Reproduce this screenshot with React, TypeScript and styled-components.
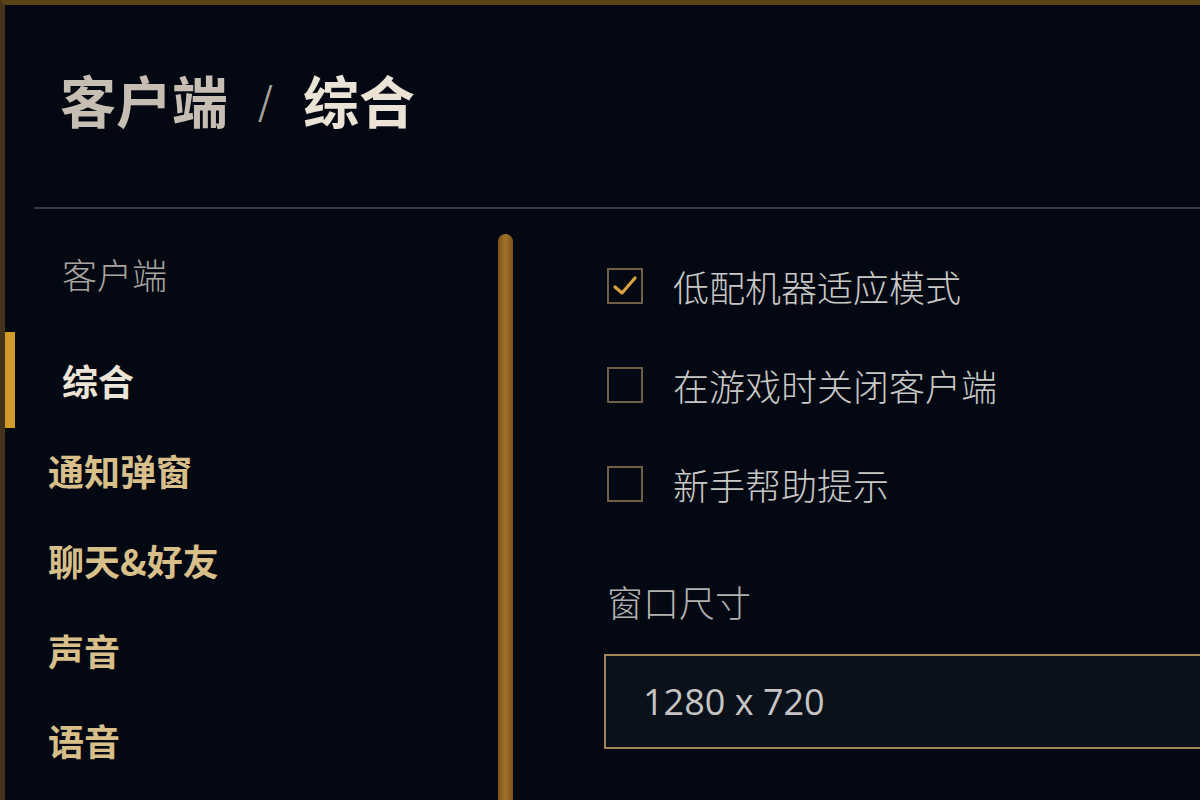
import styled, { createGlobalStyle } from 'styled-components'

const GlobalStyle = createGlobalStyle`
  html, body {
    margin: 0;
    padding: 0;
    background: #030812;
    overflow: hidden;
  }
  * { box-sizing: border-box; }
`

const FONT = `"Noto Sans CJK SC", "Noto Sans", sans-serif`

const Frame = styled.div`
  width: 1200px;
  height: 800px;
  background: #030812;
  border-top: 5px solid #5a4217;
  border-left: 5px solid #45321a;
  font-family: ${FONT};
  display: flex;
  flex-direction: column;
  overflow: hidden;
`

const Header = styled.header`
  height: 202px;
  padding: 49px 0 0 55px;
  display: flex;
  align-items: flex-start;
  gap: 30px;
  font-size: 56px;
  font-weight: 700;
  line-height: 90px;
`

const Crumb = styled.span<{ $current?: boolean }>`
  color: ${p => (p.$current ? '#ebe3d6' : '#c6beb2')};
`

const Slash = styled.span`
  color: #a8a39a;
  font-weight: 400;
  font-size: 38px;
`

const Divider = styled.hr`
  margin: 0 0 0 29px;
  border: none;
  height: 2px;
  background: #363b48;
`

const Body = styled.div`
  flex: 1;
  display: grid;
  grid-template-columns: 493px 16px 1fr;
  min-height: 0;
`

const Sidebar = styled.nav`
  display: flex;
  flex-direction: column;
  padding-top: 40px;
`

const GroupLabel = styled.div`
  padding-left: 57px;
  height: 50px;
  font-size: 35px;
  line-height: 50px;
  color: #a9a6a1;
  font-weight: 300;
  margin-bottom: 33px;
`

const NavItem = styled.div<{ $active?: boolean }>`
  position: relative;
  height: 96px;
  display: flex;
  align-items: center;
  padding-left: ${p => (p.$active ? '57px' : '43px')};
  font-size: 36px;
  font-weight: 700;
  color: ${p => (p.$active ? '#ece4d6' : '#d8bf8a')};
  margin-top: ${p => (p.$active ? '0' : '-6px')};

  &::before {
    content: '';
    display: ${p => (p.$active ? 'block' : 'none')};
    position: absolute;
    left: 0;
    top: 0;
    bottom: 0;
    width: 10px;
    background: #d39b2c;
  }
`

const ScrollTrack = styled.div`
  padding-top: 25px;
`

const ScrollThumb = styled.div`
  width: 15px;
  height: 100%;
  border-radius: 8px 8px 0 0;
  background: linear-gradient(90deg, #7d5318, #a1712a 50%, #7d5318);
`

const Content = styled.section`
  padding: 52px 0 0 93px;
  display: flex;
  flex-direction: column;
`

const CheckRow = styled.label`
  display: flex;
  align-items: center;
  gap: 30px;
  height: 50px;
  margin-bottom: 49px;
  font-size: 36px;
  color: #c9c8c6;
  font-weight: 300;
`

const Box = styled.span`
  width: 36px;
  height: 36px;
  border: 2px solid #6f5f47;
  display: flex;
  align-items: center;
  justify-content: center;
  flex-shrink: 0;
`

const FieldLabel = styled.div`
  margin-top: 18px;
  font-size: 36px;
  font-weight: 300;
  color: #b3b2b0;
  line-height: 50px;
`

const SelectBox = styled.div`
  margin: 28px -10px 0 -3px;
  height: 95px;
  border: 2px solid #a3855a;
  background: #0b111b;
  display: flex;
  align-items: center;
  padding-left: 37px;
  font-family: "Open Sans", "Noto Sans", sans-serif;
  font-size: 36px;
  color: #c6c5c3;
`

function CheckBox({ checked }: { checked?: boolean }) {
  return (
    <Box>
      {checked && (
        <svg width="26" height="22" viewBox="0 0 26 22">
          <path d="M3 12 L10 18 L23 3" fill="none" stroke="#d9a23f" strokeWidth="3.2" strokeLinecap="round" strokeLinejoin="round" />
        </svg>
      )}
    </Box>
  )
}

const options = [
  { label: '低配机器适应模式', checked: true },
  { label: '在游戏时关闭客户端', checked: false },
  { label: '新手帮助提示', checked: false },
]

const navItems = ['通知弹窗', '聊天&好友', '声音', '语音']

export default function App() {
  return (
    <>
      <GlobalStyle />
      <Frame>
        <Header>
          <Crumb>客户端</Crumb>
          <Slash>/</Slash>
          <Crumb $current>综合</Crumb>
        </Header>
        <Divider />
        <Body>
          <Sidebar>
            <GroupLabel>客户端</GroupLabel>
            <NavItem $active>综合</NavItem>
            {navItems.map(item => (
              <NavItem key={item}>{item}</NavItem>
            ))}
          </Sidebar>
          <ScrollTrack>
            <ScrollThumb />
          </ScrollTrack>
          <Content>
            {options.map(o => (
              <CheckRow key={o.label}>
                <CheckBox checked={o.checked} />
                {o.label}
              </CheckRow>
            ))}
            <FieldLabel>窗口尺寸</FieldLabel>
            <SelectBox>1280 x 720</SelectBox>
          </Content>
        </Body>
      </Frame>
    </>
  )
}
